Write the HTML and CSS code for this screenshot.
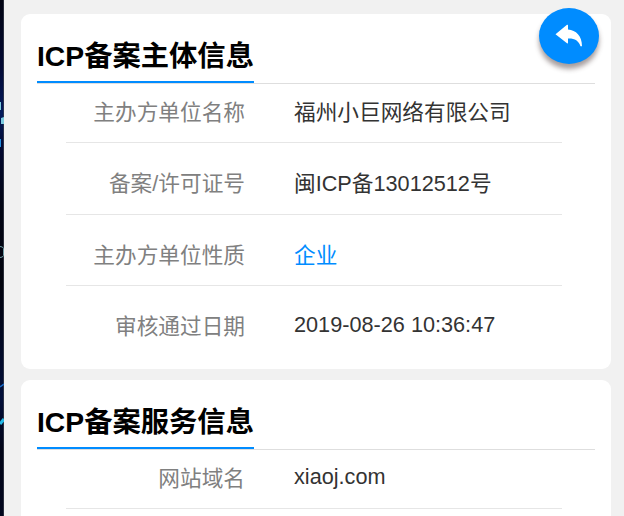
FILE: index.html
```html
<!DOCTYPE html>
<html lang="zh-CN">
<head>
<meta charset="utf-8">
<title>ICP备案信息</title>
<link rel="stylesheet" href="styles.css">
</head>
<body>
<div class="page">
  <svg class="backdrop" viewBox="0 0 4 516" aria-hidden="true">
    <defs>
      <linearGradient id="night" x1="0" y1="0" x2="0" y2="1">
        <stop offset="0" stop-color="#020512"/>
        <stop offset=".13" stop-color="#020a35"/>
        <stop offset=".22" stop-color="#031a5c"/>
        <stop offset=".29" stop-color="#020930"/>
        <stop offset=".4" stop-color="#020615"/>
        <stop offset=".55" stop-color="#02040f"/>
        <stop offset=".77" stop-color="#020f3a"/>
        <stop offset=".87" stop-color="#020619"/>
        <stop offset="1" stop-color="#02071e"/>
      </linearGradient>
    </defs>
    <path fill="url(#night)" d="M0 0h4v516H0z"/>
    <path fill="#3a3e4b" d="M3 0h1v516H3z" opacity=".7"/>
    <path fill="#7ccbe0" d="M0 102h1v8H0zM1 118l3-1v7H1z"/>
    <path fill="#238ee0" d="M0 139h1v8H0z"/>
    <path fill="none" stroke="#6f9ca5" d="M0 246.500q3 0 3.500 2v7q-.5 2-3.500 2"/>
    <path fill="none" stroke="#1769c9" stroke-width="1.500" d="M0 387l4-3"/>
    <path fill="none" stroke="#25b9e7" stroke-width="3" d="M0 424l4-5"/>
  </svg>
  <main class="content">
    <section class="card">
      <header class="card-head"><h2>ICP备案主体信息</h2></header>
      <dl class="rows">
        <div class="row"><dt>主办方单位名称</dt><dd>福州小巨网络有限公司</dd></div>
        <div class="row"><dt>备案/许可证号</dt><dd>闽ICP备13012512号</dd></div>
        <div class="row"><dt>主办方单位性质</dt><dd class="accent">企业</dd></div>
        <div class="row"><dt>审核通过日期</dt><dd class="latin">2019-08-26 10:36:47</dd></div>
      </dl>
    </section>
    <section class="card">
      <header class="card-head"><h2>ICP备案服务信息</h2></header>
      <dl class="rows">
        <div class="row"><dt>网站域名</dt><dd class="latin">xiaoj.com</dd></div>
        <div class="row"></div>
      </dl>
    </section>
  </main>
  <button class="back" aria-label="返回">
    <svg viewBox="0 0 28 24" aria-hidden="true"><path fill="#fff" d="M.500 10.200L12 .800Q13 .300 13 1.500V5.500C21 6 27 12 27 22.200H25.500C23.500 16.500 19.500 14.200 13 14.500V18.500Q13 19.800 12 19.200Z"/></svg>
  </button>
</div>
</body>
</html>
```

FILE: styles.css
```css
* {
  box-sizing: border-box;
}

body {
  margin: 0;
  background: #f1f1f1;
  font-family: "Liberation Sans", "Noto Sans CJK SC", sans-serif;
}

.page {
  position: relative;
  display: flex;
  height: 516px;
  overflow: hidden;
}

.backdrop {
  flex: none;
  width: 4px;
  height: 516px;
}

.content {
  display: flex;
  flex: 1;
  flex-direction: column;
  gap: 11px;
  padding: 14px 13px 0 17px;
}

.card {
  flex: none;
  height: 355px;
  padding: 0 16px;
  border-radius: 9px;
  background: #fff;
}

.card-head {
  display: flex;
  height: 70px;
  border-bottom: 1px solid #dedede;
}

.card-head h2 {
  height: 69px;
  margin: 0;
  padding-top: 14px;
  border-bottom: 2px solid #008cff;
  color: #000;
  font-size: 28.3px;
  line-height: 56px;
  white-space: nowrap;
}

.rows {
  margin: 0;
  padding: 0 33px 0 29px;
}

.row {
  display: flex;
  height: 71.500px;
  padding-top: 10px;
  border-bottom: 1px solid #e6e6e6;
  font-size: 21.68px;
  line-height: 61px;
  white-space: nowrap;
}

.row:first-child {
  height: 59px;
  padding-top: 0;
  line-height: 57px;
}

.row:last-child {
  border-bottom: 0;
}

.row dt {
  width: 179px;
  color: #808080;
  text-align: right;
}

.row dd {
  margin: 0 0 0 49px;
  color: #333;
}

.row dd.accent {
  color: #008cff;
}

.row dd.latin {
  margin-top: -2px;
}

.back {
  position: absolute;
  top: 8px;
  left: 539px;
  display: flex;
  align-items: center;
  justify-content: center;
  width: 60px;
  height: 56px;
  padding: 0;
  border: 0;
  border-radius: 50%;
  background: #008cff;
  box-shadow: 0 5px 5px rgba(60, 40, 40, .45);
}

.back svg {
  width: 28px;
  height: 24px;
}
```
